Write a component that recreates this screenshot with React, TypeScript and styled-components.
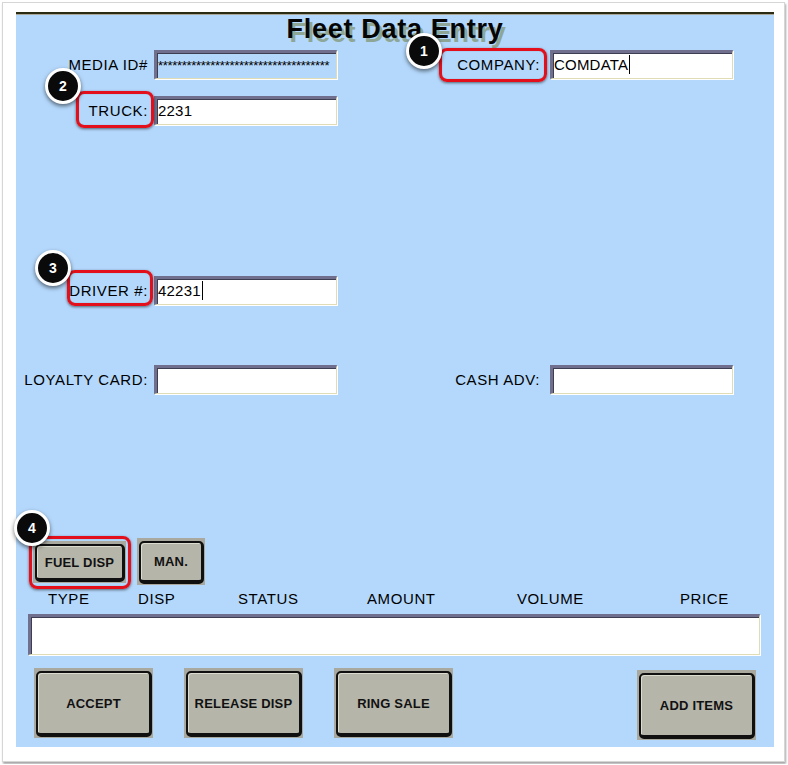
import styled, { createGlobalStyle } from "styled-components";

const GlobalStyle = createGlobalStyle`
  body {
    margin: 0;
    background: #ffffff;
    font-family: "Liberation Sans", Arial, sans-serif;
  }
`;

const Frame = styled.div`
  margin: 2px;
  width: 783px;
  height: 760px;
  box-sizing: border-box;
  padding: 9px 0 0 13px;
  background: #ffffff;
  border: 1px solid #d6d6d6;
  box-shadow: 1px 2px 2px rgba(0, 0, 0, 0.35);
`;

const Panel = styled.div`
  width: 758px;
  height: 735px;
  box-sizing: border-box;
  background: #b4d8fc;
  border-top: 2px solid #2b2b14;
  box-shadow: inset 0 1px 0 #a9a99b;
  display: flex;
  flex-direction: column;
  font-size: 15px;
  letter-spacing: 0.6px;
  color: #000;
`;

const Title = styled.h1`
  margin: 1px 0 0;
  height: 35px;
  line-height: 28px;
  text-align: center;
  font-size: 27px;
  font-weight: 700;
  letter-spacing: 0.7px;
  color: #050505;
  text-shadow: 3px 4px 0 #8da696;
`;

const Row = styled.div<{ $top: number }>`
  margin-top: ${(p) => p.$top}px;
  height: 29px;
  display: flex;
`;

const Field = styled.div<{ $labelW: number; $gap: number }>`
  position: relative;
  display: grid;
  grid-template-columns: ${(p) => p.$labelW}px 183px;
  column-gap: ${(p) => p.$gap}px;
  align-items: center;
`;

const Label = styled.span`
  text-align: right;
  white-space: nowrap;
  line-height: 29px;
`;

const Box = styled.div<{ $blue?: boolean }>`
  height: 29px;
  box-sizing: border-box;
  background: ${(p) => (p.$blue ? "#b4d8fc" : "#ffffff")};
  border-top: 3px solid #70708e;
  border-left: 3px solid #70708e;
  border-right: 1px solid #e0dcb6;
  border-bottom: 1px solid #e0dcb6;
  box-shadow: inset 1px 1px 0 #3e3e52, 1px 1px 0 #ffffff;
  padding-left: 1px;
  line-height: 24px;
  letter-spacing: 0.2px;
  white-space: nowrap;
  overflow: hidden;
`;

const Stars = styled.span`
  font-size: 13px;
  letter-spacing: -0.3px;
`;

const Caret = styled.span`
  display: inline-block;
  width: 1px;
  height: 19px;
  margin-left: 1px;
  background: #000;
  vertical-align: -4px;
`;

const Mark = styled.div<{ $l: number; $t: number; $w: number; $h: number }>`
  position: absolute;
  left: ${(p) => p.$l}px;
  top: ${(p) => p.$t}px;
  width: ${(p) => p.$w}px;
  height: ${(p) => p.$h}px;
  box-sizing: border-box;
  border: 3px solid #e3101c;
  border-radius: 8px;
  box-shadow: 0 1px 3px rgba(0, 0, 0, 0.55), inset 0 0 1px rgba(0, 0, 0, 0.4);
  pointer-events: none;
  z-index: 1;
`;

const Badge = styled.div<{ $l: number; $t: number }>`
  position: absolute;
  left: ${(p) => p.$l}px;
  top: ${(p) => p.$t}px;
  width: 30px;
  height: 30px;
  border-radius: 50%;
  background: #0a0a0a;
  border: 3px solid #ffffff;
  box-shadow: 0 2px 4px rgba(0, 0, 0, 0.55);
  color: #fff;
  font-size: 14px;
  font-weight: 700;
  letter-spacing: 0;
  line-height: 30px;
  text-align: center;
  z-index: 2;
`;

const ButtonRow = styled.div`
  margin-top: 144px;
  height: 47px;
  padding-left: 17px;
  display: flex;
  align-items: flex-start;
  gap: 11px;
`;

const BtnFrame = styled.div<{ $w: number; $h: number; $top?: number }>`
  position: relative;
  width: ${(p) => p.$w}px;
  height: ${(p) => p.$h}px;
  margin-top: ${(p) => p.$top ?? 0}px;
  box-sizing: border-box;
  background: #a9a99f;
  padding: 3px 1px 1px 2px;
  display: flex;
`;

const BtnFace = styled.div`
  flex: 1;
  box-sizing: border-box;
  background: #b5b5aa;
  border: 2px solid #101010;
  border-right-width: 3px;
  border-bottom-width: 4px;
  border-radius: 5px;
  box-shadow: inset 1px 1px 0 #dcdcd0;
  display: flex;
  align-items: center;
  justify-content: center;
  font-size: 13px;
  font-weight: 700;
  letter-spacing: 0.2px;
  color: #111;
  white-space: nowrap;
`;

const Headers = styled.div`
  height: 27px;
  padding-left: 32px;
  display: grid;
  grid-template-columns: 90px 100px 129px 150px 163px auto;
  line-height: 27px;
`;

const Grid = styled.div`
  margin: 2px 0 0 12px;
  width: 732px;
  height: 41px;
  box-sizing: border-box;
  background: #fff;
  border-top: 3px solid #70708e;
  border-left: 3px solid #70708e;
  border-right: 1px solid #e0dcb6;
  border-bottom: 1px solid #e0dcb6;
  box-shadow: inset 1px 1px 0 #3e3e52, 1px 1px 0 #ffffff;
`;

const ActionRow = styled.div`
  margin-top: 13px;
  padding: 0 18px;
  display: flex;
  align-items: flex-start;
  gap: 31px;
`;

const Spacer = styled.div`
  flex: 1;
`;

const actions = ["ACCEPT", "RELEASE DISP", "RING SALE"];
const columns = ["TYPE", "DISP", "STATUS", "AMOUNT", "VOLUME", "PRICE"];

export default function App() {
  return (
    <>
      <GlobalStyle />
      <Frame>
        <Panel>
          <Title>Fleet Data Entry</Title>

          <Row $top={0}>
            <Field $labelW={132} $gap={6}>
              <Label>MEDIA ID#</Label>
              <Box $blue>
                <Stars>{"*".repeat(36)}</Stars>
              </Box>
            </Field>
            <Field $labelW={203} $gap={10}>
              <Label>COMPANY:</Label>
              <Box>
                COMDATA
                <Caret />
              </Box>
              <Mark $l={102} $t={-2} $w={108} $h={34} />
              <Badge $l={69} $t={-17}>1</Badge>
            </Field>
          </Row>

          <Row $top={17}>
            <Field $labelW={132} $gap={6}>
              <Label>TRUCK:</Label>
              <Box>2231</Box>
              <Mark $l={60} $t={-5} $w={78} $h={37} />
              <Badge $l={29} $t={-28}>2</Badge>
            </Field>
          </Row>

          <Row $top={151}>
            <Field $labelW={132} $gap={6}>
              <Label>DRIVER #:</Label>
              <Box>
                42231
                <Caret />
              </Box>
              <Mark $l={51} $t={-6} $w={86} $h={36} />
              <Badge $l={19} $t={-26}>3</Badge>
            </Field>
          </Row>

          <Row $top={60}>
            <Field $labelW={132} $gap={6}>
              <Label>LOYALTY CARD:</Label>
              <Box />
            </Field>
            <Field $labelW={203} $gap={10}>
              <Label>CASH ADV:</Label>
              <Box />
            </Field>
          </Row>

          <ButtonRow>
            <BtnFrame $w={93} $h={42} $top={3}>
              <BtnFace>FUEL DISP</BtnFace>
              <Mark $l={-4} $t={-5} $w={102} $h={53} />
              <Badge $l={-19} $t={-31}>4</Badge>
            </BtnFrame>
            <BtnFrame $w={68} $h={47}>
              <BtnFace>MAN.</BtnFace>
            </BtnFrame>
          </ButtonRow>

          <Headers>
            {columns.map((c) => (
              <span key={c}>{c}</span>
            ))}
          </Headers>
          <Grid />

          <ActionRow>
            {actions.map((a) => (
              <BtnFrame key={a} $w={119} $h={70}>
                <BtnFace>{a}</BtnFace>
              </BtnFrame>
            ))}
            <Spacer />
            <BtnFrame $w={119} $h={70} $top={2}>
              <BtnFace>ADD ITEMS</BtnFace>
            </BtnFrame>
          </ActionRow>
        </Panel>
      </Frame>
    </>
  );
}
